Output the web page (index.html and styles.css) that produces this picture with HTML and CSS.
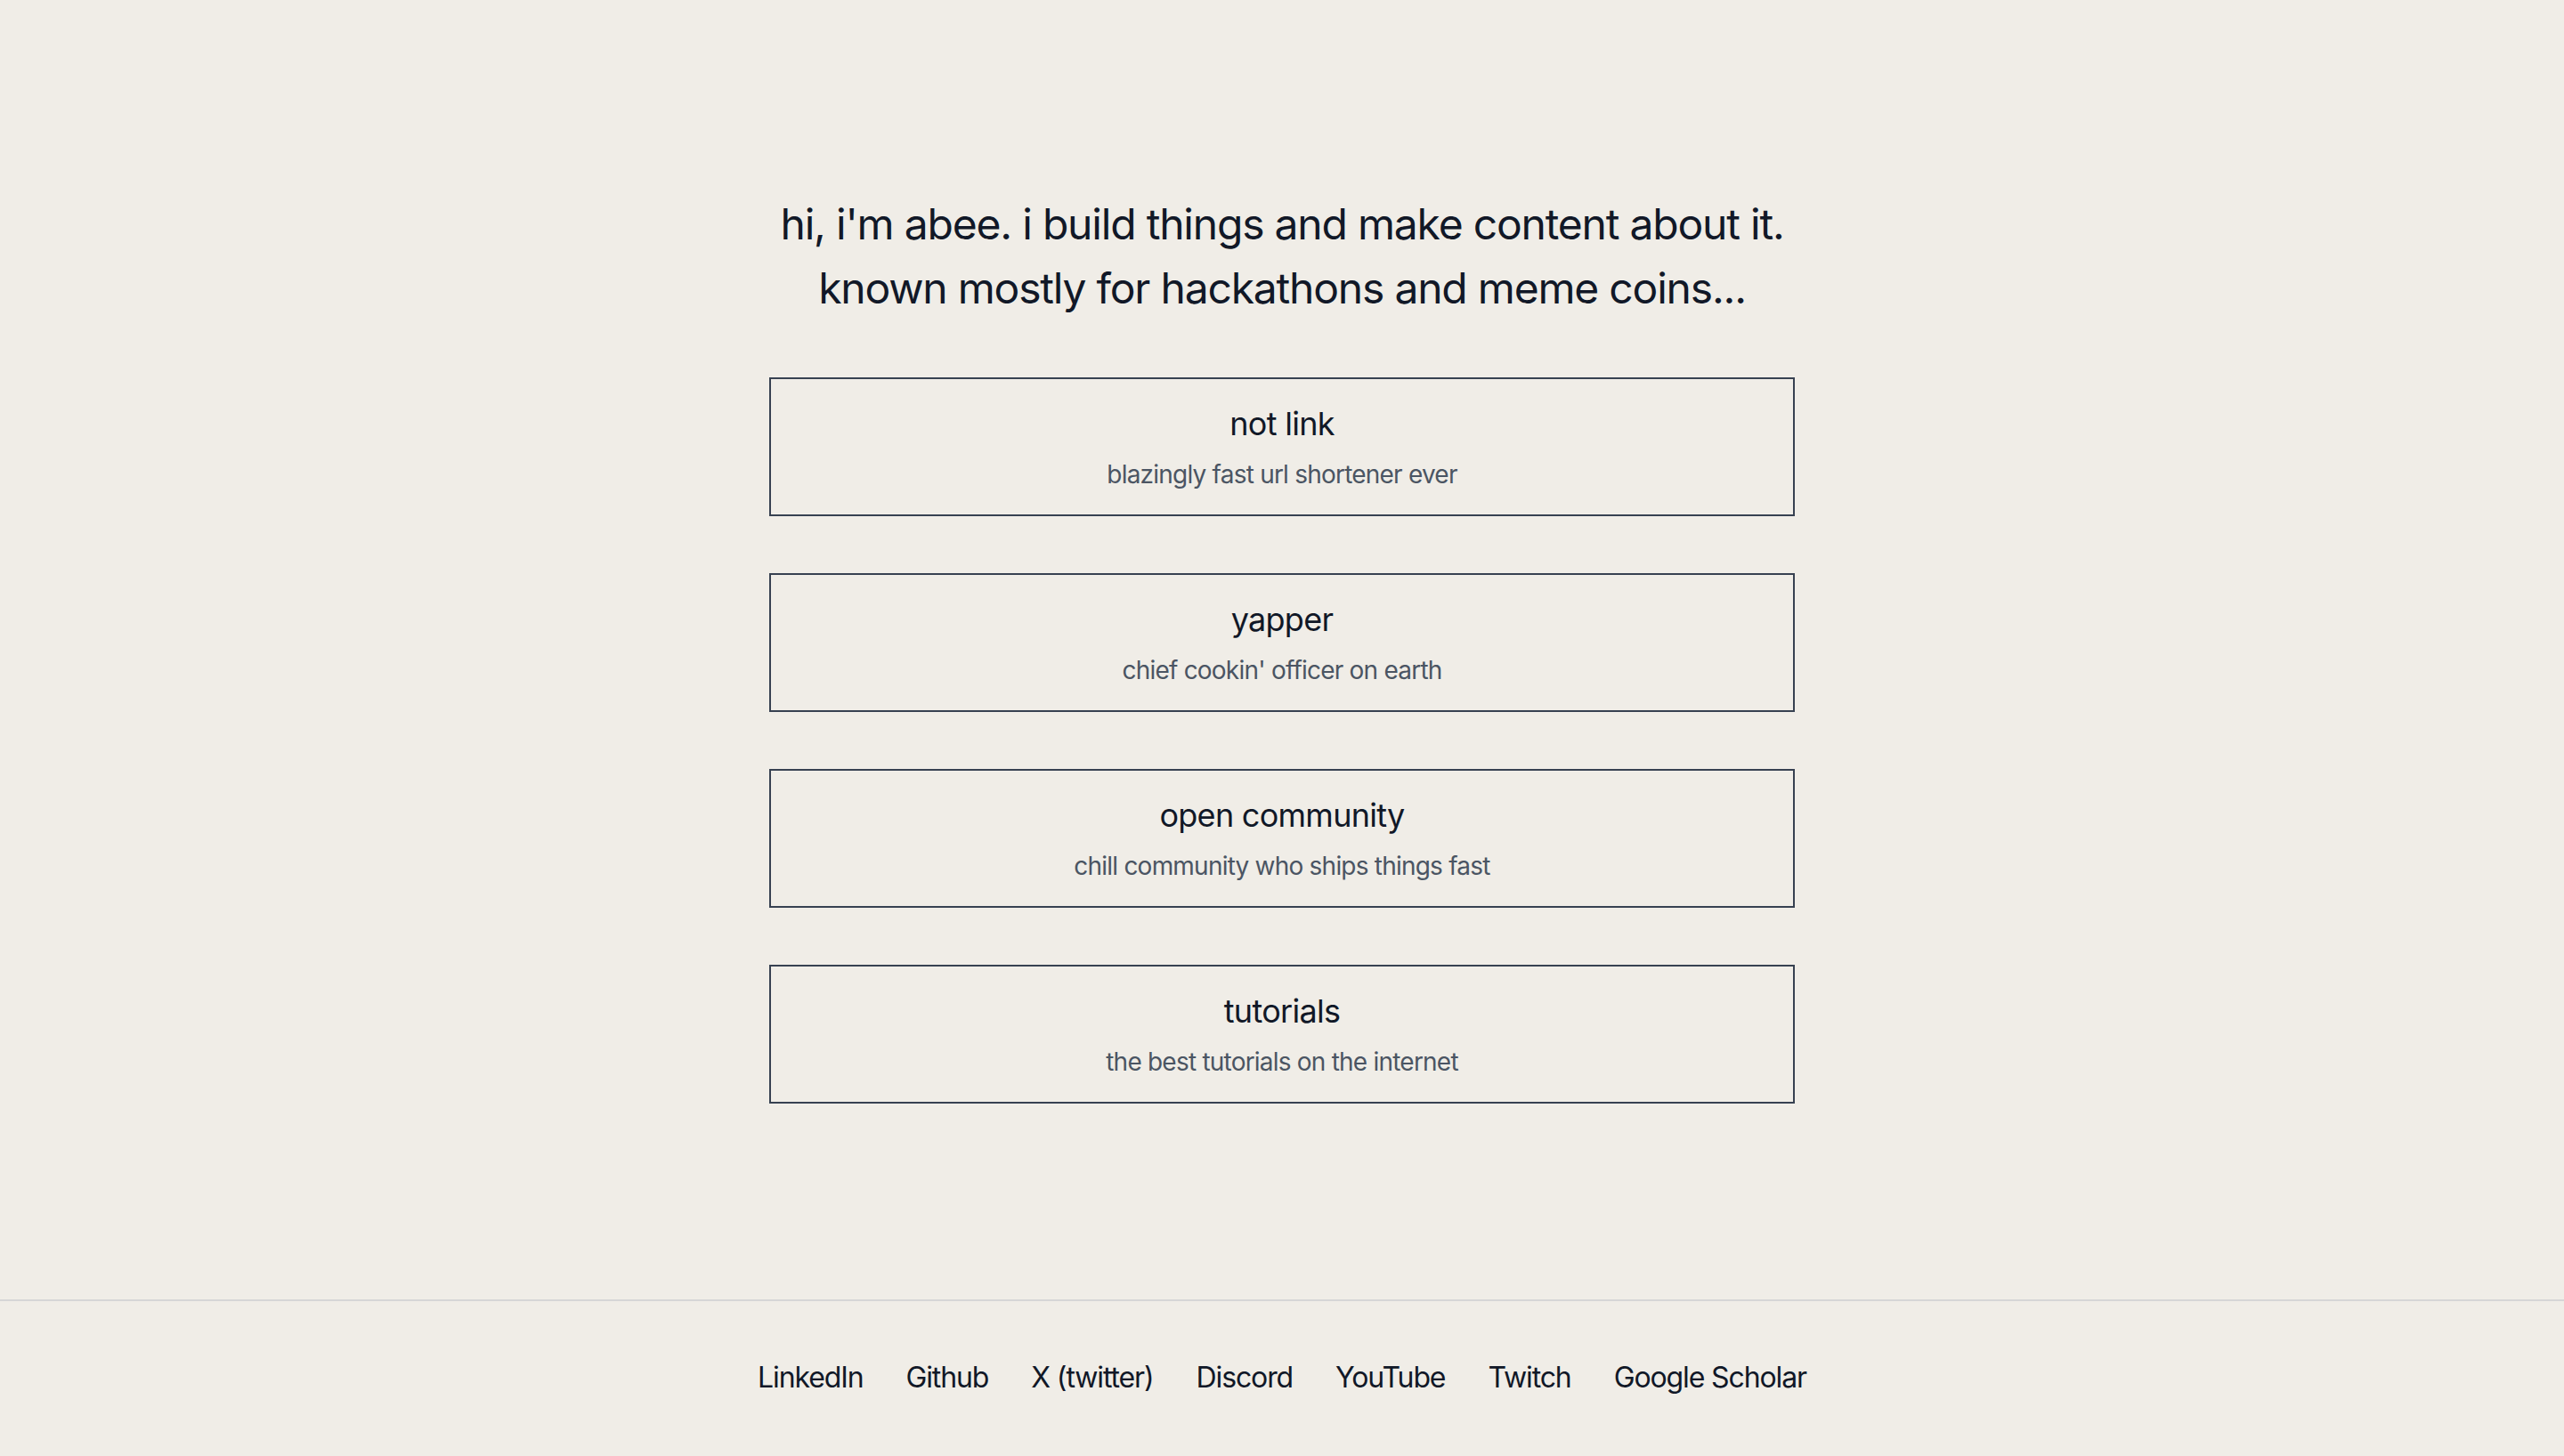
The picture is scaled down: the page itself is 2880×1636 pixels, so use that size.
FILE: index.html
```html
<!DOCTYPE html>
<html lang="en">
<head>
<meta charset="utf-8">
<title>abee</title>
<link rel="stylesheet" href="styles.css">
</head>
<body>
<div class="page">
  <main class="main">
    <h1 class="intro">
      <span class="intro-line">hi, i'm abee. i build things and make content about it.</span>
      <span class="intro-line">known mostly for hackathons and meme coins...</span>
    </h1>
    <div class="cards">
      <a class="card" href="#">
        <span class="card-title">not link</span>
        <span class="card-desc">blazingly fast url shortener ever</span>
      </a>
      <a class="card" href="#">
        <span class="card-title">yapper</span>
        <span class="card-desc">chief cookin' officer on earth</span>
      </a>
      <a class="card" href="#">
        <span class="card-title">open community</span>
        <span class="card-desc">chill community who ships things fast</span>
      </a>
      <a class="card" href="#">
        <span class="card-title">tutorials</span>
        <span class="card-desc">the best tutorials on the internet</span>
      </a>
    </div>
  </main>
  <footer class="footer">
    <nav class="footer-links">
      <a href="#">LinkedIn</a>
      <a href="#">Github</a>
      <a href="#">X (twitter)</a>
      <a href="#">Discord</a>
      <a href="#">YouTube</a>
      <a href="#">Twitch</a>
      <a href="#">Google Scholar</a>
    </nav>
  </footer>
</div>
</body>
</html>
```

FILE: styles.css
```css
* { box-sizing: border-box; }
html, body { margin: 0; padding: 0; }
body {
  background: #f0ede7;
  color: #111827;
  font-family: Inter, "Noto Sans", "Liberation Sans", sans-serif;
}
.page {
  min-height: 100vh;
  display: flex;
  flex-direction: column;
}
.main {
  flex: 1;
  display: flex;
  flex-direction: column;
  align-items: center;
  padding-top: 216px;
}
.intro {
  margin: 0;
  font-weight: 400;
  font-size: 48px;
  line-height: 72px;
  letter-spacing: -0.025em;
  text-align: center;
  color: #111827;
  display: flex;
  flex-direction: column;
  align-items: center;
}
.cards {
  margin-top: 64px;
  width: 1152px;
  display: flex;
  flex-direction: column;
  gap: 64px;
}
.card {
  display: flex;
  flex-direction: column;
  align-items: center;
  border: 2px solid #374151;
  padding: 24px 24px 24px;
  text-decoration: none;
  height: 156px;
}
.card-title {
  font-size: 36px;
  line-height: 52px;
  letter-spacing: -0.02em;
  color: #111827;
}
.card-desc {
  margin-top: 10px;
  font-size: 28px;
  line-height: 42px;
  letter-spacing: -0.028em;
  color: #4b5563;
}
.footer {
  border-top: 2px solid #d6d6d6;
  padding: 62px 0 64px;
}
.footer-links {
  display: flex;
  justify-content: center;
  gap: 48px;
}
.footer-links a {
  color: #111827;
  text-decoration: none;
  font-size: 32px;
  line-height: 48px;
  letter-spacing: -0.035em;
}
```
